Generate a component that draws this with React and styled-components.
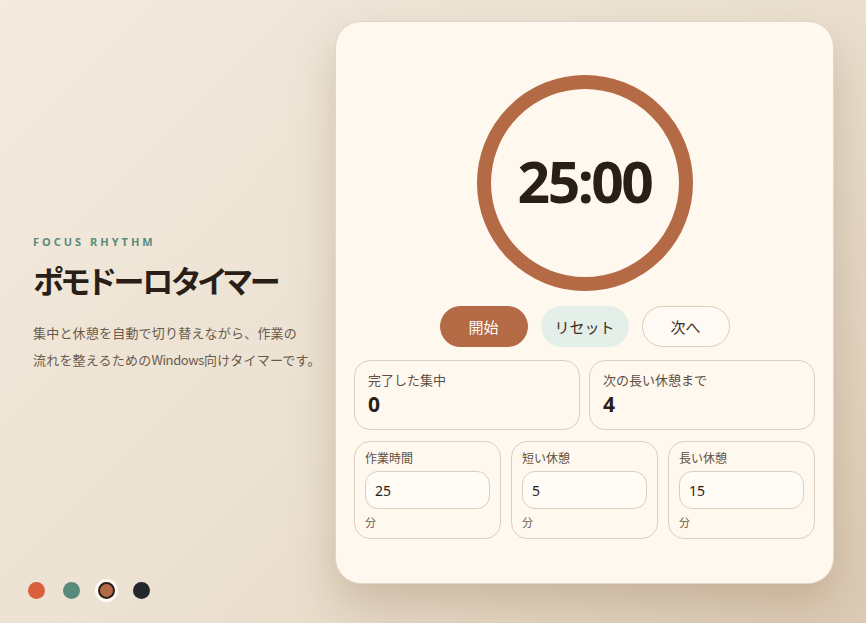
import React, { useState } from "react";
import styled, { createGlobalStyle } from "styled-components";

const GlobalStyle = createGlobalStyle`
  * { box-sizing: border-box; }
  html, body { margin: 0; padding: 0; height: 100%; }
  body {
    background: linear-gradient(135deg, #f3ebdf 0%, #ebe0d0 55%, #dccab3 100%);
    font-family: "Noto Sans", "Noto Sans CJK JP", sans-serif;
    color: #2a1f18;
  }
`;

const Page = styled.div`
  width: 866px;
  height: 623px;
  display: grid;
  grid-template-columns: 335px 499px;
  padding-top: 21px;
  position: relative;
`;

const Intro = styled.section`
  padding-left: 33px;
  padding-top: 213px;
`;

const Eyebrow = styled.div`
  font-family: "Noto Sans", sans-serif;
  font-size: 11px;
  font-weight: 700;
  letter-spacing: 3px;
  color: #5b8b7b;
`;

const Title = styled.h1`
  margin: 11px 0 0;
  font-family: "Noto Sans CJK JP", sans-serif;
  font-size: 31px;
  font-weight: 700;
  letter-spacing: -2px;
  font-feature-settings: "palt";
  line-height: 1.3;
  color: #2a1f18;
`;

const Lead = styled.p`
  margin: 19px 0 0;
  font-family: "Noto Sans CJK JP", sans-serif;
  font-size: 13px;
  line-height: 27px;
  letter-spacing: 0.2px;
  color: #6b5a4c;
`;

const Latin = styled.span`
  letter-spacing: -0.4px;
`;

const Swatches = styled.div`
  position: absolute;
  left: 28px;
  bottom: 24px;
  display: flex;
  gap: 18px;
  align-items: center;
`;

const Swatch = styled.button`
  width: 17px;
  height: 17px;
  border-radius: 50%;
  padding: 0;
  background: ${(p) => p.$color};
  border: ${(p) => (p.$active ? "2px solid #2a1f18" : "none")};
  box-shadow: ${(p) => (p.$active ? "0 0 0 3px #fffaf3" : "none")};
  cursor: pointer;
`;

const Card = styled.main`
  height: 563px;
  background: #fff8ee;
  border: 1px solid #e2d6c6;
  border-radius: 26px;
  box-shadow: 0 20px 44px rgba(120, 90, 55, 0.26);
  padding: 53px 18px 18px;
  display: flex;
  flex-direction: column;
  align-items: center;
`;

const Dial = styled.div`
  width: 216px;
  height: 216px;
  border-radius: 50%;
  border: 14px solid #b36a45;
  display: flex;
  align-items: center;
  justify-content: center;
`;

const Time = styled.div`
  font-family: "Noto Sans", sans-serif;
  font-size: 57px;
  font-weight: 700;
  letter-spacing: -2.5px;
  color: #2a1f18;
  margin-top: -4px;
`;

const Controls = styled.div`
  display: flex;
  gap: 13px;
  margin-top: 15px;
`;

const Button = styled.button`
  width: 88px;
  height: 41px;
  border-radius: 21px;
  font-family: "Noto Sans CJK JP", sans-serif;
  font-size: 15px;
  cursor: pointer;
  background: ${(p) =>
    p.$variant === "primary" ? "#b36a45" : p.$variant === "soft" ? "#e5efea" : "#fffaf3"};
  color: ${(p) => (p.$variant === "primary" ? "#fffaf3" : "#3a2e26")};
  border: ${(p) => (p.$variant === "ghost" ? "1px solid #dccebd" : "none")};
`;

const Stats = styled.div`
  width: 100%;
  display: grid;
  grid-template-columns: 1fr 1fr;
  gap: 9px;
  margin-top: 13px;
`;

const StatBox = styled.div`
  height: 70px;
  border: 1px solid #dccfbe;
  border-radius: 16px;
  padding: 9px 13px;
  display: flex;
  flex-direction: column;
`;

const StatLabel = styled.span`
  font-family: "Noto Sans CJK JP", sans-serif;
  font-size: 13px;
  color: #5e4f44;
`;

const StatValue = styled.span`
  margin-top: 2px;
  font-family: "Noto Sans", sans-serif;
  font-size: 21px;
  font-weight: 700;
  line-height: 1.3;
  color: #2a1f18;
`;

const Settings = styled.div`
  width: 100%;
  display: grid;
  grid-template-columns: repeat(3, 1fr);
  gap: 10px;
  margin-top: 11px;
`;

const Field = styled.label`
  height: 98px;
  border: 1px solid #dccfbe;
  border-radius: 16px;
  padding: 7px 10px;
  display: flex;
  flex-direction: column;
`;

const FieldLabel = styled.span`
  font-family: "Noto Sans CJK JP", sans-serif;
  font-size: 12px;
  color: #5e4f44;
`;

const Input = styled.input`
  margin-top: 5px;
  height: 38px;
  width: 100%;
  border: 1px solid #dccfbe;
  border-radius: 13px;
  background: #fffbf5;
  padding: 0 9px;
  font-family: "Noto Sans", sans-serif;
  font-size: 14px;
  color: #2a1f18;
  outline: none;
`;

const Unit = styled.span`
  margin-top: 5px;
  font-family: "Noto Sans CJK JP", sans-serif;
  font-size: 11px;
  color: #6b5a4c;
`;

const themes = ["#d9603c", "#5a8a7b", "#b36a45", "#23272b"];

export default function App() {
  const [active, setActive] = useState(2);
  const [work, setWork] = useState("25");
  const [short, setShort] = useState("5");
  const [long, setLong] = useState("15");

  return (
    <>
      <GlobalStyle />
      <Page>
        <Intro>
          <Eyebrow>FOCUS RHYTHM</Eyebrow>
          <Title>ポモドーロタイマー</Title>
          <Lead>
            集中と休憩を自動で切り替えながら、作業の
            <br />
            流れを整えるための<Latin>Windows</Latin>向けタイマーです。
          </Lead>
        </Intro>

        <Card>
          <Dial>
            <Time>25:00</Time>
          </Dial>
          <Controls>
            <Button $variant="primary">開始</Button>
            <Button $variant="soft">リセット</Button>
            <Button $variant="ghost">次へ</Button>
          </Controls>
          <Stats>
            <StatBox>
              <StatLabel>完了した集中</StatLabel>
              <StatValue>0</StatValue>
            </StatBox>
            <StatBox>
              <StatLabel>次の長い休憩まで</StatLabel>
              <StatValue>4</StatValue>
            </StatBox>
          </Stats>
          <Settings>
            <Field>
              <FieldLabel>作業時間</FieldLabel>
              <Input value={work} onChange={(e) => setWork(e.target.value)} />
              <Unit>分</Unit>
            </Field>
            <Field>
              <FieldLabel>短い休憩</FieldLabel>
              <Input value={short} onChange={(e) => setShort(e.target.value)} />
              <Unit>分</Unit>
            </Field>
            <Field>
              <FieldLabel>長い休憩</FieldLabel>
              <Input value={long} onChange={(e) => setLong(e.target.value)} />
              <Unit>分</Unit>
            </Field>
          </Settings>
        </Card>

        <Swatches>
          {themes.map((c, i) => (
            <Swatch key={c} $color={c} $active={i === active} onClick={() => setActive(i)} />
          ))}
        </Swatches>
      </Page>
    </>
  );
}
